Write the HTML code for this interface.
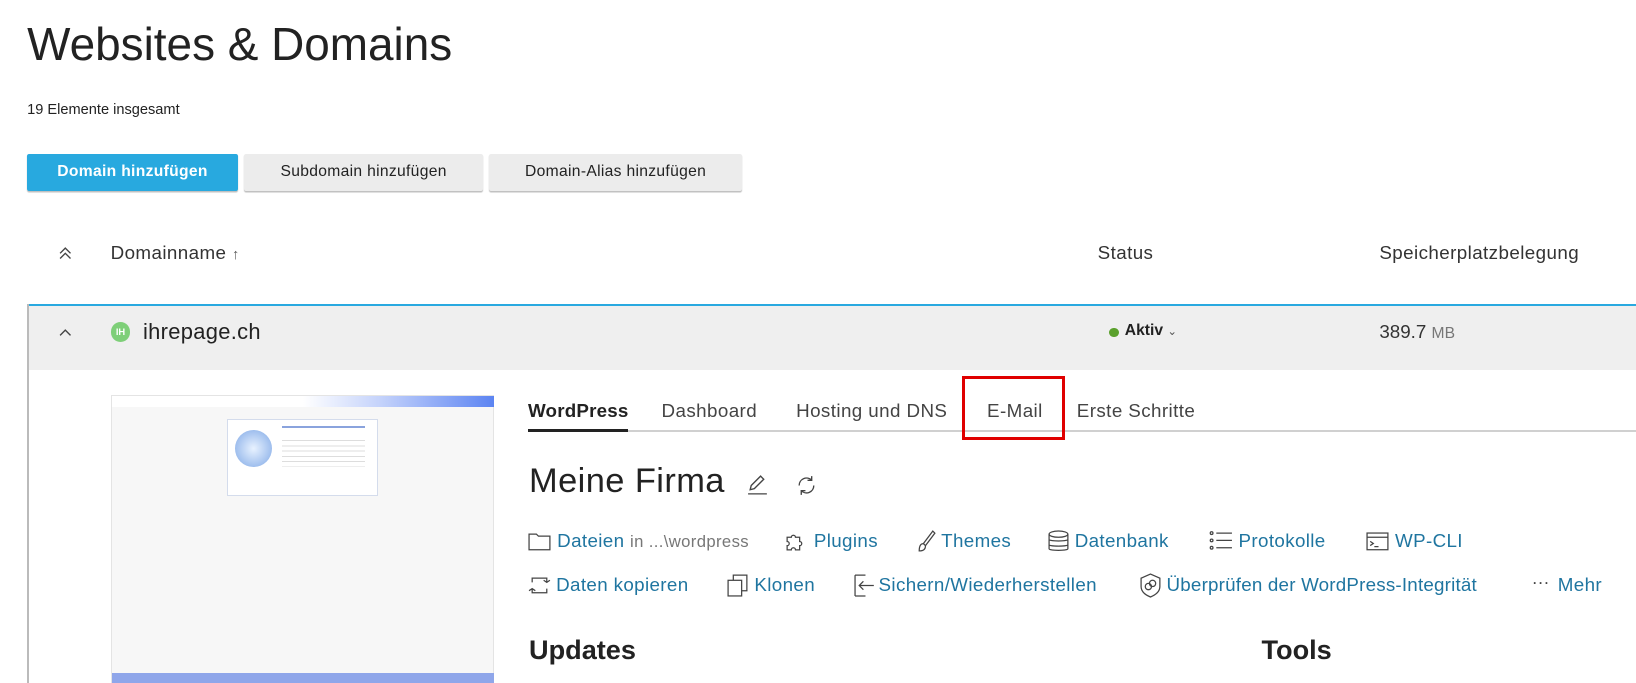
<!DOCTYPE html>
<html><head><meta charset="utf-8"><style>
html,body{margin:0;padding:0;background:#fff;overflow:hidden;width:1636px;height:683px}
#w{zoom:1.0434;position:relative;width:1568px;height:655px;font-family:"Liberation Sans",sans-serif;color:#222}
.a{position:absolute;white-space:nowrap}
.btn{position:absolute;top:148px;height:35px;line-height:35px;text-align:center;font-size:15px;border-radius:2px;box-shadow:0 1px 1px rgba(0,0,0,.25);letter-spacing:.3px}
.lnk{color:#1f75a0;font-size:18px;letter-spacing:.35px}
.tab{position:absolute;top:383px;font-size:18px;color:#444;letter-spacing:.4px}
svg{position:absolute}
</style></head><body><div id="w">
<div class="a" style="left:26px;top:16px;font-size:44px;color:#222">Websites &amp; Domains</div>
<div class="a" style="left:26px;top:98px;font-size:14px">19 Elemente insgesamt</div>
<div class="btn" style="left:26px;width:202px;background:#28a9df;color:#fff;font-weight:bold">Domain hinzufügen</div>
<div class="btn" style="left:234px;width:229px;background:#ececec;color:#222">Subdomain hinzufügen</div>
<div class="btn" style="left:469px;width:242px;background:#ececec;color:#222">Domain-Alias hinzufügen</div>

<svg style="left:56px;top:236px" width="14" height="14" viewBox="0 0 14 14" fill="none" stroke="#444" stroke-width="1.3"><path d="M2 7l5-5 5 5M2 12l5-5 5 5"/></svg>
<div class="a" style="left:106px;top:232px;font-size:18px;color:#333;letter-spacing:.4px">Domainname <span style="font-size:14px;color:#555">↑</span></div>
<div class="a" style="left:1052px;top:232px;font-size:18px;color:#333;letter-spacing:.4px">Status</div>
<div class="a" style="left:1322px;top:232px;font-size:18px;color:#333;letter-spacing:.4px">Speicherplatzbelegung</div>

<div class="a" style="left:27px;top:291px;width:1541px;height:2px;background:#29a9e0"></div>
<div class="a" style="left:27px;top:293px;width:1541px;height:62px;background:#efefef"></div>
<div class="a" style="left:26px;top:291px;width:2px;height:364px;background:#bbb"></div>
<svg style="left:56px;top:313px" width="14" height="10" viewBox="0 0 14 10" fill="none" stroke="#444" stroke-width="1.3"><path d="M2 8l5-5 5 5"/></svg>
<div class="a" style="left:106px;top:309px;width:19px;height:19px;border-radius:50%;background:#7ecf78;color:#fff;font-size:9px;font-weight:bold;line-height:19px;text-align:center">IH</div>
<div class="a" style="left:137px;top:306px;font-size:21px;color:#222;letter-spacing:.3px">ihrepage.ch</div>
<div class="a" style="left:1063px;top:314px;width:9px;height:9px;border-radius:50%;background:#5aa02c"></div>
<div class="a" style="left:1078px;top:309px;font-size:15px;font-weight:bold;color:#222">Aktiv <span style="font-weight:normal;font-size:11px;color:#555">⌄</span></div>
<div class="a" style="left:1322px;top:308px;font-size:18px;color:#333">389.7 <span style="color:#777;font-size:15px">MB</span></div>

<div class="a" style="left:106px;top:379px;width:366px;height:276px;background:#f7f7f7;border:1px solid #e4e4e4"></div>
<div class="a" style="left:107px;top:380px;width:366px;height:10px;background:linear-gradient(90deg,#fff 0%,#fff 50%,#c5d3fb 70%,#5c84f2 100%)"></div>
<div class="a" style="left:218px;top:402px;width:142px;height:71px;background:#fff;border:1px solid #d4dcec"></div>
<div class="a" style="left:225px;top:412px;width:36px;height:36px;border-radius:50%;background:radial-gradient(#e8f2ff,#7fa8e6)"></div>
<div class="a" style="left:270px;top:408px;width:80px;height:2px;background:#8aa3dd"></div>
<div class="a" style="left:270px;top:418px;width:80px;height:30px;background:repeating-linear-gradient(#fff 0 4px,#ddd 4px 5px)"></div>
<div class="a" style="left:107px;top:645px;width:366px;height:10px;background:#8fa6ea"></div>

<div class="a" style="left:506px;top:412px;width:1062px;height:2px;background:#d0d0d0"></div>
<div class="tab" style="left:506px;color:#222;font-weight:bold;letter-spacing:.2px">WordPress</div>
<div class="a" style="left:506px;top:411px;width:96px;height:3px;background:#222"></div>
<div class="tab" style="left:634px">Dashboard</div>
<div class="tab" style="left:763px">Hosting und DNS</div>
<div class="tab" style="left:946px">E-Mail</div>
<div class="tab" style="left:1032px">Erste Schritte</div>
<div class="a" style="left:922px;top:360px;width:93px;height:56px;border:3px solid #e00000"></div>

<div class="a" style="left:507px;top:443px;font-size:33px;color:#222;letter-spacing:.4px">Meine Firma</div>
<svg style="left:715px;top:453px" width="22" height="22" viewBox="0 0 22 22" fill="none" stroke="#444" stroke-width="1.3"><path d="M4 16l1-4 9-9 3 3-9 9zM2 20h18"/></svg>
<svg style="left:762px;top:454px" width="22" height="22" viewBox="0 0 22 22" fill="none" stroke="#444" stroke-width="1.3"><path d="M4 11a7 7 0 0 1 12-5M18 11a7 7 0 0 1-12 5M16 2v4h-4M6 20v-4h4"/></svg>

<svg style="left:506px;top:510px" width="22" height="18" viewBox="0 0 22 18" fill="none" stroke="#444" stroke-width="1.2"><path d="M1 2h7l2 2h11v13H1z"/></svg>
<div class="a lnk" style="left:534px;top:508px">Dateien <span style="color:#777;font-size:16px">in ...\wordpress</span></div>
<svg style="left:751px;top:508px" width="22" height="22" viewBox="0 0 22 22" fill="none" stroke="#444" stroke-width="1.2"><path d="M3 7h4a2 2 0 1 1 4 0h4v4a2 2 0 1 1 0 4v4H11a2 2 0 1 0-4 0H3v-4a2 2 0 1 0 0-4z"/></svg>
<div class="a lnk" style="left:780px;top:508px">Plugins</div>
<svg style="left:876px;top:507px" width="22" height="24" viewBox="0 0 22 24" fill="none" stroke="#444" stroke-width="1.2"><path d="M18 2L9 14l2 2L20 4zM9 14c-3 0-4 3-4 7 3 0 6-1 6-5"/></svg>
<div class="a lnk" style="left:902px;top:508px">Themes</div>
<svg style="left:1003px;top:508px" width="22" height="22" viewBox="0 0 22 22" fill="none" stroke="#444" stroke-width="1.2"><ellipse cx="11" cy="4" rx="9" ry="3"/><path d="M2 4v14c0 2 18 2 18 0V4M2 9c0 2 18 2 18 0M2 14c0 2 18 2 18 0"/></svg>
<div class="a lnk" style="left:1030px;top:508px">Datenbank</div>
<svg style="left:1159px;top:508px" width="24" height="22" viewBox="0 0 24 22" fill="none" stroke="#444" stroke-width="1.2"><circle cx="2.5" cy="3" r="1.3"/><circle cx="2.5" cy="10" r="1.3"/><circle cx="2.5" cy="17" r="1.3"/><path d="M7 3h15M7 10h15M7 17h15"/></svg>
<div class="a lnk" style="left:1187px;top:508px">Protokolle</div>
<svg style="left:1309px;top:510px" width="22" height="18" viewBox="0 0 22 18" fill="none" stroke="#444" stroke-width="1.2"><rect x="1" y="1" width="20" height="16"/><path d="M1 5h20M4 9l3 2-3 2M8 14h4"/></svg>
<div class="a lnk" style="left:1337px;top:508px">WP-CLI</div>

<svg style="left:506px;top:550px" width="22" height="22" viewBox="0 0 22 22" fill="none" stroke="#444" stroke-width="1.2"><path d="M4 8V4h14v4M15 6l3 2 3-2M18 14v4H4v-4M7 16l-3-2-3 2"/></svg>
<div class="a lnk" style="left:533px;top:550px">Daten kopieren</div>
<svg style="left:696px;top:549px" width="22" height="24" viewBox="0 0 22 24" fill="none" stroke="#444" stroke-width="1.2"><rect x="2" y="7" width="13" height="15"/><path d="M7 7V2h13v15h-5"/></svg>
<div class="a lnk" style="left:723px;top:550px">Klonen</div>
<svg style="left:818px;top:549px" width="22" height="24" viewBox="0 0 22 24" fill="none" stroke="#444" stroke-width="1.2"><path d="M1 2v20M1 2h10M1 22h10M5 12h14M9 8l-4 4 4 4"/></svg>
<div class="a lnk" style="left:842px;top:550px">Sichern/Wiederherstellen</div>
<svg style="left:1092px;top:549px" width="22" height="24" viewBox="0 0 22 24" fill="none" stroke="#444" stroke-width="1.2"><path d="M11 1l9 4v8c0 5-4 8-9 10-5-2-9-5-9-10V5z"/><circle cx="9" cy="13" r="3"/><circle cx="13" cy="10" r="3"/></svg>
<div class="a lnk" style="left:1118px;top:550px;letter-spacing:.2px">Überprüfen der WordPress-Integrität</div>
<div class="a" style="left:1468px;top:548px;font-size:17px;color:#444">···</div>
<div class="a lnk" style="left:1493px;top:550px">Mehr</div>

<div class="a" style="left:507px;top:608px;font-size:26px;font-weight:bold;color:#222">Updates</div>
<div class="a" style="left:1209px;top:608px;font-size:26px;font-weight:bold;color:#222">Tools</div>
</div></body></html>
